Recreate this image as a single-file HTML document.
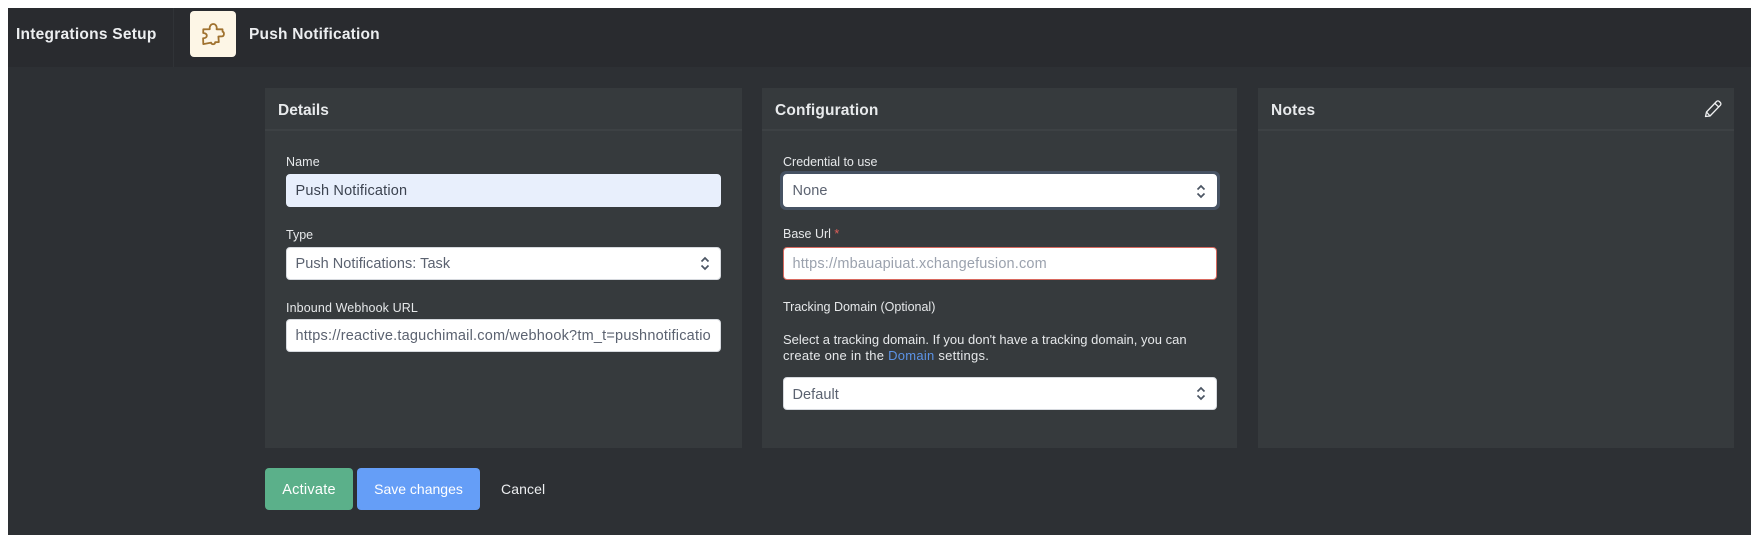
<!DOCTYPE html>
<html><head><meta charset="utf-8"><style>
html,body{margin:0;padding:0;background:#fff;width:1760px;height:546px;overflow:hidden}
body{font-family:"Liberation Sans",sans-serif;position:relative}
.a{position:absolute;box-sizing:border-box}
.t{position:absolute;white-space:nowrap;line-height:20px}
.lab{font-size:12.5px;color:#e6e8ea}
.h{font-size:15.5px;font-weight:700;color:#e8eaec}
.p{background:#363a3d;top:88px;height:360px}
.l{height:2px;top:129px;background:#3d4144}
.i{background:#fff;border-radius:4px;height:33px;font-size:14.5px;color:#5b6270;line-height:32px;padding-left:8.500px;white-space:nowrap;overflow:hidden;border:1px solid #d6d9de}
</style></head><body>
<div class="a" style="left:8px;top:8px;width:1743px;height:527px;background:#2d3034"></div>
<div class="a" style="left:8px;top:8px;width:1743px;height:59px;background:#292b2f"></div>
<div class="a" style="left:173px;top:8px;width:1px;height:59px;background:#303337"></div>
<div class="t h" style="left:16px;top:24.500px;letter-spacing:.25px;color:#eceef0">Integrations Setup</div>
<div class="a" style="left:190px;top:11px;width:46px;height:46px;background:#fdf6e6;border-radius:4px"></div>
<svg class="a" style="left:201px;top:22px" width="24" height="24" viewBox="0 0 24 24" fill="none" stroke="#a0722f" stroke-width="1.800" stroke-linejoin="round"><path d="M8.800 7.200C8.200 4.200 10 2 12.300 2c2.300 0 3.900 2.400 3.300 5.300h5.900l.1 2.400c1.800.3 1.800 4.200-.2 4.600l-4 .2.400 5.600-3.600.1c-.2 2.700-3.600 2.700-4.100.4l-7.800 1.500-.2-5.800c.6-.1 3.700-.3 3.700-2.600 0-2.400-3-2.600-3.600-2.700L2.300 7.300z"/></svg>
<div class="t h" style="left:249px;top:24.500px;letter-spacing:.2px;color:#eceef0">Push Notification</div>

<div class="a p" style="left:265px;width:477px"></div>
<div class="a p" style="left:762px;width:475px"></div>
<div class="a p" style="left:1258px;width:476px"></div>
<div class="a l" style="left:265px;width:477px"></div>
<div class="a l" style="left:762px;width:475px"></div>
<div class="a l" style="left:1258px;width:476px"></div>
<div class="t h" style="left:278px;top:101px">Details</div>
<div class="t h" style="left:775px;top:101px;letter-spacing:.15px">Configuration</div>
<div class="t h" style="left:1271px;top:101px;letter-spacing:.25px">Notes</div>
<svg class="a" style="left:1703px;top:99px" width="20" height="20" viewBox="0 0 20 20" fill="none" stroke="#f0f1f2" stroke-width="1.300" stroke-linejoin="round"><path d="M2.500 17.500l1-4.500L13.500 2.500c.8-.8 2-.8 2.800 0l1 1c.8.800.8 2 0 2.800L7 17z"/><path d="M12 4.500l3.800 3.500M3.500 13l3.500 4"/></svg>

<div class="t lab" style="left:286px;top:152px;letter-spacing:.1px">Name</div>
<div class="a i" style="left:286px;top:174px;width:435px;background:#e8effc;border-color:#e8effc;color:#3c4350;letter-spacing:.17px">Push Notification</div>
<div class="t lab" style="left:286px;top:225px">Type</div>
<div class="a i" style="left:286px;top:247px;width:435px;letter-spacing:.04px">Push Notifications: Task</div>
<div class="t lab" style="left:286px;top:298px;letter-spacing:.12px">Inbound Webhook URL</div>
<div class="a i" style="left:286px;top:319px;width:435px;padding-right:3px;letter-spacing:.21px">https://reactive.taguchimail.com/webhook?tm_t=pushnotificatio</div>

<div class="t lab" style="left:783px;top:152px">Credential to use</div>
<div class="a" style="left:780px;top:171px;width:440px;height:39px;border-radius:6px;background:#465263"></div>
<div class="a i" style="left:783px;top:174px;width:434px;border-color:#fff;letter-spacing:.1px">None</div>
<div class="t lab" style="left:783px;top:224px">Base Url <span style="color:#e0605a">*</span></div>
<div class="a i" style="left:783px;top:247px;width:434px;border-color:#d8695f;color:#9ba2ae;letter-spacing:.17px">https://mbauapiuat.xchangefusion.com</div>
<div class="t lab" style="left:783px;top:297px">Tracking Domain (Optional)</div>
<div class="t lab" style="left:783px;top:332px;font-size:13px;line-height:16px">Select a tracking domain. If you don't have a tracking domain, you can<br><span style="letter-spacing:.26px">create one in the <span style="color:#5c93e6">Domain</span> settings.</span></div>
<div class="a i" style="left:783px;top:377px;width:434px;letter-spacing:.05px;line-height:34px">Default</div>

<svg class="a" style="left:699px;top:256px" width="12" height="15" viewBox="0 0 12 15" fill="none" stroke="#4b5563" stroke-width="1.700"><path d="M2.500 5.500L6 2l3.500 3.500M2.500 9.500L6 13l3.500-3.500"/></svg>
<svg class="a" style="left:1195px;top:184px" width="12" height="15" viewBox="0 0 12 15" fill="none" stroke="#4b5563" stroke-width="1.700"><path d="M2.500 5.500L6 2l3.500 3.500M2.500 9.500L6 13l3.500-3.500"/></svg>
<svg class="a" style="left:1195px;top:386px" width="12" height="15" viewBox="0 0 12 15" fill="none" stroke="#4b5563" stroke-width="1.700"><path d="M2.500 5.500L6 2l3.500 3.500M2.500 9.500L6 13l3.500-3.500"/></svg>

<div class="a" style="left:265px;top:468px;width:88px;height:42px;background:#5bb08a;border-radius:4px;color:#fff;font-size:14.500px;line-height:45px;text-align:center;letter-spacing:.25px">Activate</div>
<div class="a" style="left:357px;top:468px;width:123px;height:42px;background:#659ef7;border-radius:4px;color:#fff;font-size:14px;line-height:43px;text-align:center">Save changes</div>
<div class="t" style="left:501px;top:479px;font-size:14px;color:#eceef0;letter-spacing:.1px">Cancel</div>
</body></html>
